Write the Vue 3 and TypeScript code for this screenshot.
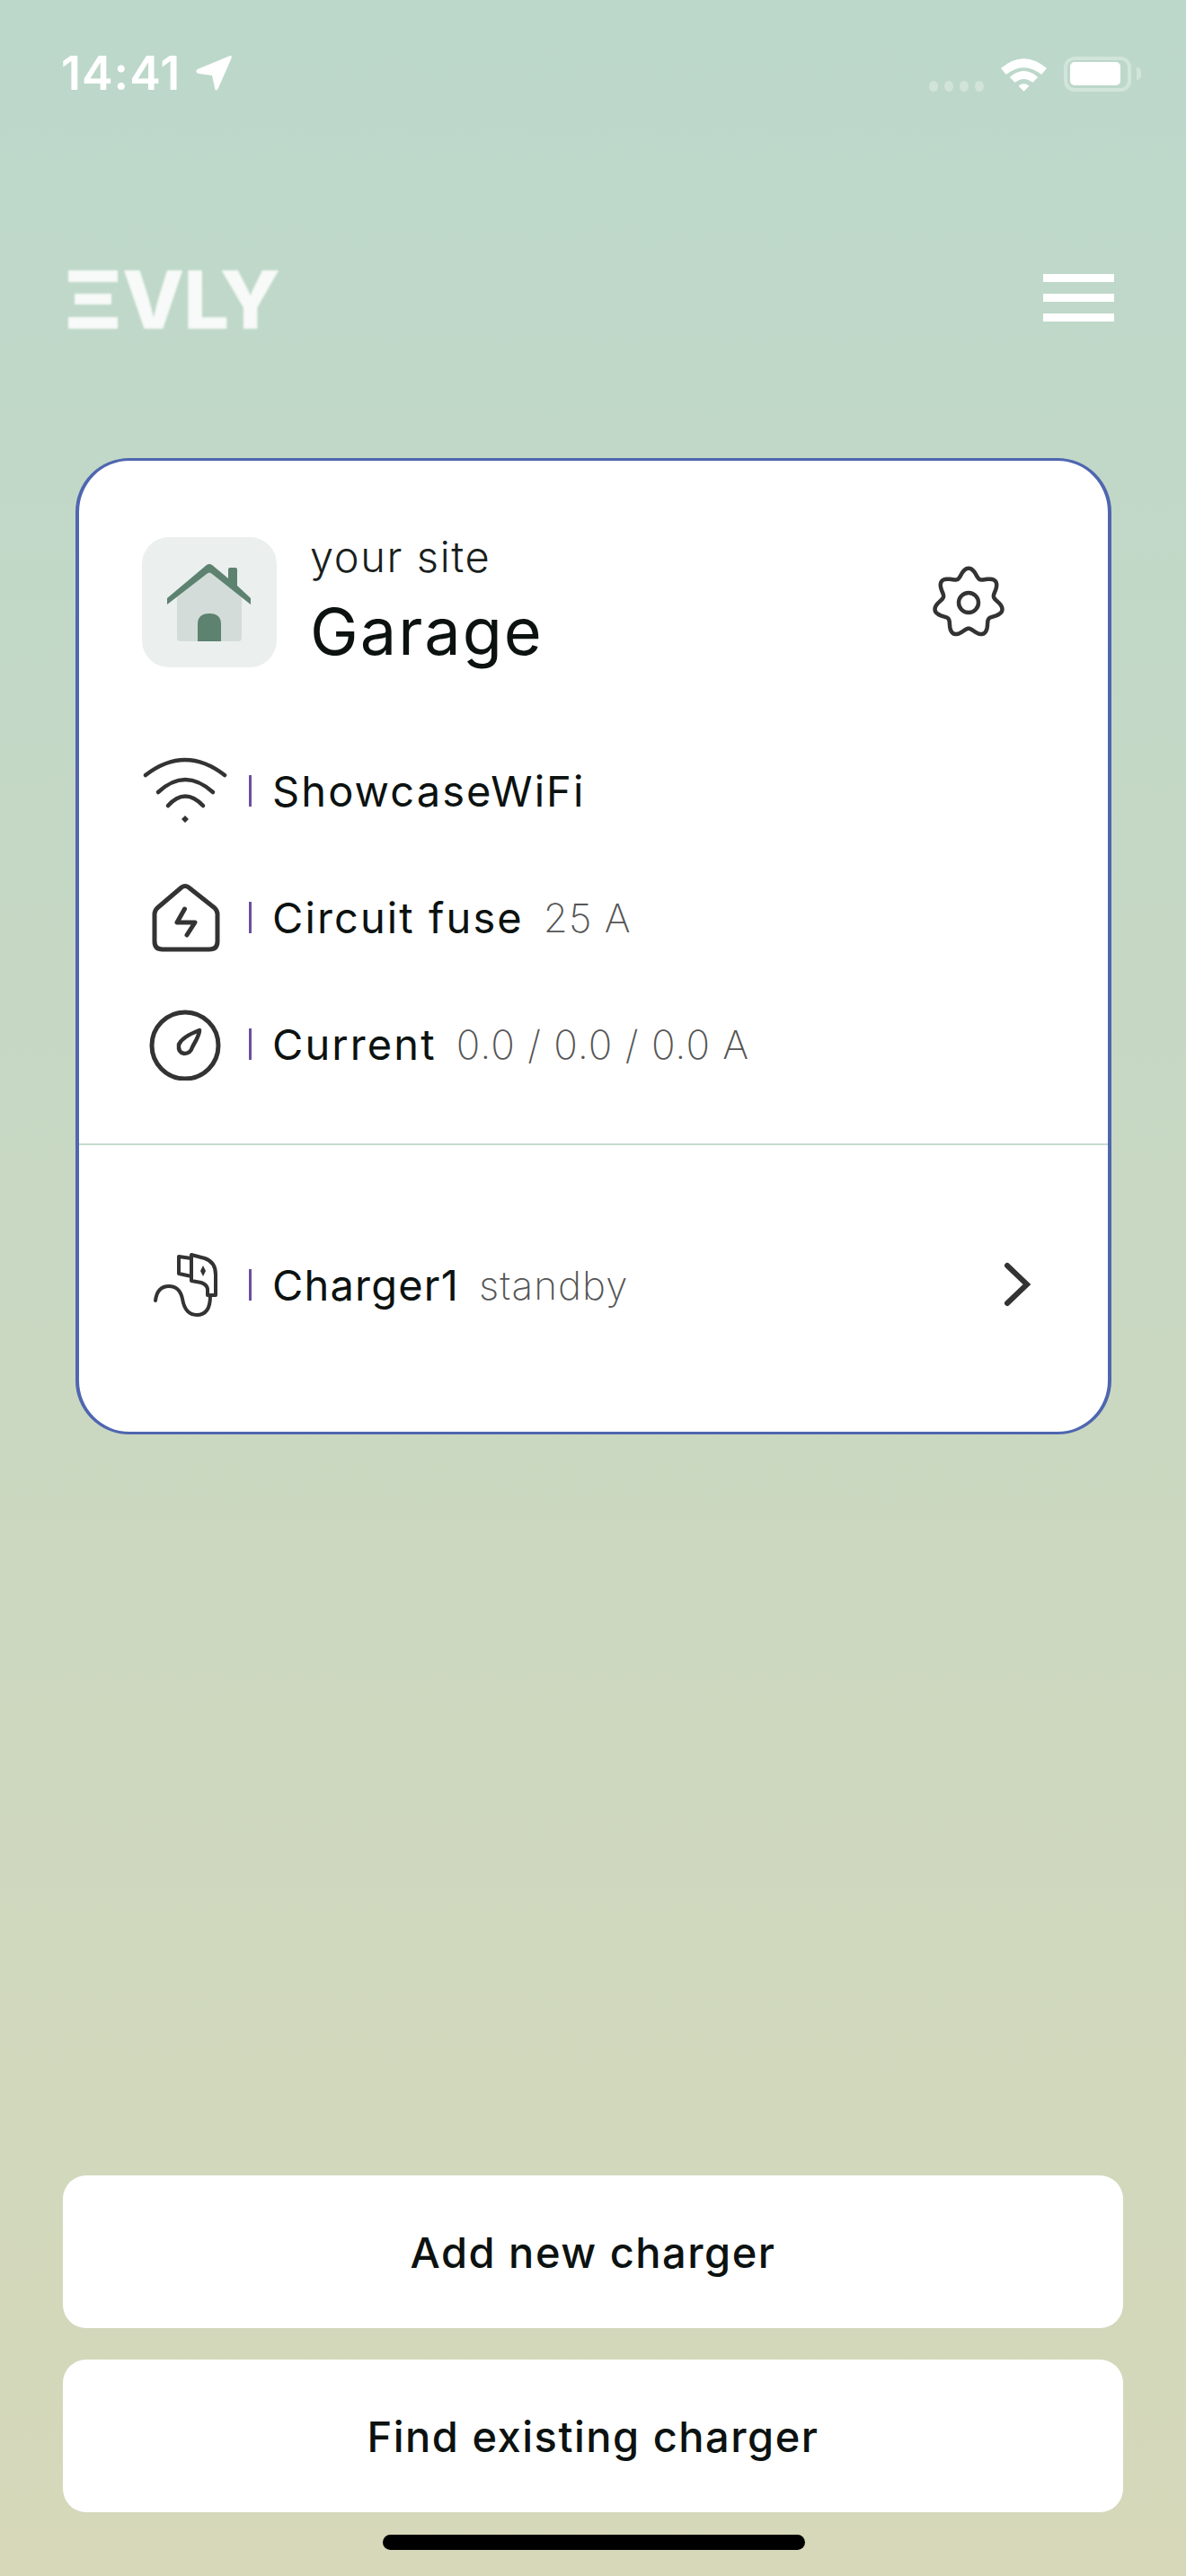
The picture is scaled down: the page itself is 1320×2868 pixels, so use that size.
<script setup lang="ts">
function gearPath(): string {
  const pts: string[] = [];
  const n = 168;
  for (let i = 0; i < n; i++) {
    const t = (i / n) * Math.PI * 2;
    const r = 33.5 + 4.8 * Math.cos(7 * t);
    const x = 45 + r * Math.sin(t);
    const y = 45 - r * Math.cos(t);
    pts.push(`${x.toFixed(2)} ${y.toFixed(2)}`);
  }
  return `M${pts.join('L')}Z`;
}
const gear = gearPath();
</script>

<template>
  <div class="screen">
    <div class="status">
      <div class="status-left">
        <span class="time">14:41</span>
        <svg class="loc" width="42" height="42" viewBox="0 0 42 42">
          <path d="M38 1.500 Q41.500 0 40.500 4 L26 37 Q23 42 22 37 L19 23 L4 21 Q-1 19 3 16 Z" fill="#fff" />
        </svg>
      </div>
      <div class="status-right">
        <div class="dots"><i></i><i></i><i></i><i></i></div>
        <svg width="55" height="40" viewBox="0 0 56 40">
          <path d="M2 14 Q28 -8 54 14 L48 21 Q28 5 8 21 Z" fill="#fff" />
          <path d="M12 24 Q28 10 44 24 L38 30 Q28 22 18 30 Z" fill="#fff" />
          <path d="M22 34 Q28 29 34 34 L28 40 Z" fill="#fff" />
        </svg>
        <div class="battery"><div class="battery-fill"></div></div>
        <div class="battery-tip"></div>
      </div>
    </div>

    <header class="top">
      <div class="logo">
        <svg class="logo-e" width="56" height="66" viewBox="0 0 56 66">
          <rect x="0" y="0" width="55" height="13" fill="#f7faf8" />
          <rect x="7" y="26" width="41" height="12" fill="#f7faf8" />
          <rect x="0" y="52" width="55" height="13" fill="#f7faf8" />
        </svg>
        <span class="logo-text">VLY</span>
      </div>
      <div class="menu"><i></i><i></i><i></i></div>
    </header>

    <section class="card">
      <div class="site">
        <div class="tile">
          <svg width="150" height="145" viewBox="0 0 150 145">
            <path d="M39 66 L75 38 L111 66 V112 Q111 116 107 116 H43 Q39 116 39 112 Z" fill="#d3dcd9" />
            <path d="M62 116 V97 Q62 85 75 85 Q88 85 88 97 V116 Z" fill="#5d826f" />
            <path d="M28 68 L72 31 Q75 29 78 31 L96 46 V36 Q96 34 98 34 H104 Q106 34 106 36 V54 L121 68 V75 L78 41 Q75 38 72 41 L28 75 Z" fill="#5d826f" />
          </svg>
        </div>
        <div class="site-text">
          <div class="site-label">your site</div>
          <div class="site-name">Garage</div>
        </div>
        <svg class="gear" width="90" height="90" viewBox="0 0 90 90">
          <path :d="gear" fill="none" stroke="#333" stroke-width="4.500" stroke-linejoin="round" />
          <circle cx="45" cy="45" r="11" fill="none" stroke="#333" stroke-width="4.500" />
        </svg>
      </div>

      <div class="rows">
        <div class="row">
          <svg class="icon" width="100" height="80" viewBox="0 0 100 80">
            <g fill="none" stroke="#333" stroke-width="4.500" stroke-linecap="round">
              <path d="M6 22 Q50 -12 94 22" />
              <path d="M20 41 Q50 13 81 41" />
              <path d="M31 56 Q50 35 70 56" />
            </g>
            <path d="M50 67 L54 71 L50 75 L46 71 Z" fill="#333" />
          </svg>
          <span class="bar"></span>
          <span class="label">ShowcaseWiFi</span>
        </div>
        <div class="row">
          <svg class="icon" width="100" height="80" viewBox="0 0 100 80">
            <path d="M46 6 Q50 3 54 6 L83 29 Q86 32 86 36 V66 Q86 75 77 75 H25 Q16 75 16 66 V36 Q16 32 19 29 Z" fill="none" stroke="#333" stroke-width="5" stroke-linejoin="round" />
            <path d="M49.500 30 L41 45 H61 L52 59" fill="none" stroke="#333" stroke-width="5" stroke-linecap="round" stroke-linejoin="round" />
          </svg>
          <span class="bar"></span>
          <span class="label">Circuit fuse</span>
          <span class="value">25 A</span>
        </div>
        <div class="row">
          <svg class="icon" width="100" height="80" viewBox="0 0 100 80">
            <circle cx="50" cy="41" r="37" fill="none" stroke="#333" stroke-width="5" />
            <path d="M66 24 C58 27 46 33 43 40 Q42 49 49 50 Q56 50 58 43 C61 37 66 30 66 24 Z" fill="none" stroke="#333" stroke-width="4.500" stroke-linejoin="round" />
          </svg>
          <span class="bar"></span>
          <span class="label">Current</span>
          <span class="value">0.0 / 0.0 / 0.0 A</span>
        </div>
      </div>

      <div class="divider"></div>

      <div class="row charger">
        <svg class="icon" width="100" height="80" viewBox="0 0 100 80">
          <g fill="none" stroke="#333" stroke-width="4" stroke-linecap="round" stroke-linejoin="round">
            <path d="M17 57 Q19 41 32 41 Q44 41 47 55 Q50 73 63 73 Q78 73 78 52" />
            <path d="M57 10 L43 8 V27 L57 30" />
            <path d="M57 6 V35 L68 37 Q74 39 75 44 V51 H84 V28 Q84 14 72 10 Z" />
          </g>
          <path d="M70 18 L73 24 L70 30 L67 24 Z" fill="#333" />
        </svg>
        <span class="bar"></span>
        <span class="label charger-label">Charger1</span>
        <span class="value status-value">standby</span>
        <svg class="chevron" width="32" height="52" viewBox="0 0 32 52">
          <path d="M5 4 L27 25 L5 46" fill="none" stroke="#333" stroke-width="6" stroke-linecap="round" stroke-linejoin="miter" />
        </svg>
      </div>
    </section>

    <div class="actions">
      <button class="action" type="button">Add new charger</button>
      <button class="action" type="button">Find existing charger</button>
    </div>
    <div class="home-bar"></div>
  </div>
</template>

<style>
html, body { margin: 0; padding: 0; }
</style>

<style scoped>
.screen {
  width: 1320px;
  height: 2868px;
  box-sizing: border-box;
  display: flex;
  flex-direction: column;
  background: linear-gradient(180deg, #bcd8cb 0%, #d6d8b9 100%);
  font-family: Inter, "Liberation Sans", sans-serif;
  color: #0c1210;
  overflow: hidden;
}
.status {
  display: flex;
  justify-content: space-between;
  align-items: center;
  height: 42px;
  margin-top: 61px;
  padding: 0 50px 0 68px;
}
.status-left { display: flex; align-items: center; gap: 16px; }
.time {
  font-size: 52px;
  font-weight: 600;
  line-height: 42px;
  letter-spacing: 1px;
  color: #fff;
}
.status-right { display: flex; align-items: center; }
.dots { display: flex; gap: 7px; margin: 27px 17px 0 0; }
.dots i {
  width: 10px;
  height: 12px;
  border-radius: 50%;
  background: #d2e3d9;
  display: block;
}
.battery {
  width: 75px;
  height: 39px;
  margin-left: 17px;
  box-sizing: border-box;
  border: 4px solid #d2e5da;
  border-radius: 12px;
  padding: 2px 8px 3px 3px;
  display: flex;
}
.battery-fill { flex: 1; background: #fff; border-radius: 5px; }
.battery-tip {
  width: 5px;
  height: 14px;
  margin-left: 6px;
  background: #d2e5da;
  border-radius: 0 7px 7px 0;
}
.top {
  display: flex;
  justify-content: space-between;
  align-items: center;
  height: 69px;
  margin-top: 196px;
  padding: 0 80px 0 76px;
}
.logo { display: flex; align-items: center; filter: blur(1px); }
.logo-e { display: block; }
.logo-text {
  font-size: 90px;
  font-weight: 800;
  line-height: 66px;
  color: #f7faf8;
  letter-spacing: -1px;
  margin-left: 4px;
}
.menu { display: flex; flex-direction: column; gap: 13px; margin-bottom: 4px; }
.menu i { display: block; width: 79px; height: 9px; background: #fff; }
.card {
  width: 1153px;
  height: 1087px;
  margin: 142px 0 0 84px;
  box-sizing: border-box;
  background: #fff;
  border-style: solid;
  border-color: #4f66b0;
  border-width: 3px 4px;
  border-radius: 60px;
}
.site {
  display: flex;
  align-items: center;
  height: 145px;
  margin-top: 85px;
  padding: 0 110px 0 70px;
}
.tile {
  width: 150px;
  height: 145px;
  border-radius: 30px;
  background: #ebefee;
  flex: none;
}
.tile svg { display: block; }
.site-text { margin: -6px 0 0 37px; align-self: flex-start; }
.site-label {
  font-size: 47px;
  font-weight: 300;
  line-height: 56px;
  letter-spacing: 1.600px;
  color: #1a1f1d;
}
.site-name {
  font-size: 72px;
  font-weight: 400;
  line-height: 110px;
  letter-spacing: 2px;
}
.gear { margin-left: auto; display: block; }
.rows { margin-top: 67px; }
.row {
  display: flex;
  align-items: center;
  height: 141px;
  padding-left: 68px;
}
.icon { display: block; flex: none; }
.bar {
  width: 3px;
  height: 35px;
  margin: 0 23px 0 21px;
  background: #6b4fa0;
  flex: none;
}
.label {
  font-size: 47px;
  font-weight: 400;
  letter-spacing: 2.100px;
  line-height: 1;
  color: #0c1210;
}
.charger-label { letter-spacing: 1.200px; }
.value {
  font-size: 44px;
  font-weight: 200;
  letter-spacing: 1px;
  line-height: 1;
  color: #555;
  margin-left: 22px;
}
.divider { height: 2px; margin-top: 40px; background: #c5dccd; }
.charger { margin-top: 85px; padding-right: 85px; }
.status-value { letter-spacing: 1px; }
.chevron { margin-left: auto; display: block; }
.actions {
  margin-top: auto;
  padding: 0 70px;
  display: flex;
  flex-direction: column;
  gap: 35px;
}
.action {
  height: 170px;
  border: 0;
  border-radius: 26px;
  background: #fff;
  font-family: inherit;
  font-size: 47px;
  font-weight: 500;
  letter-spacing: 1.500px;
  color: #0c1210;
}
.home-bar {
  width: 470px;
  height: 17px;
  margin: 25px 0 29px 426px;
  border-radius: 9px;
  background: #000;
  flex: none;
}
</style>
